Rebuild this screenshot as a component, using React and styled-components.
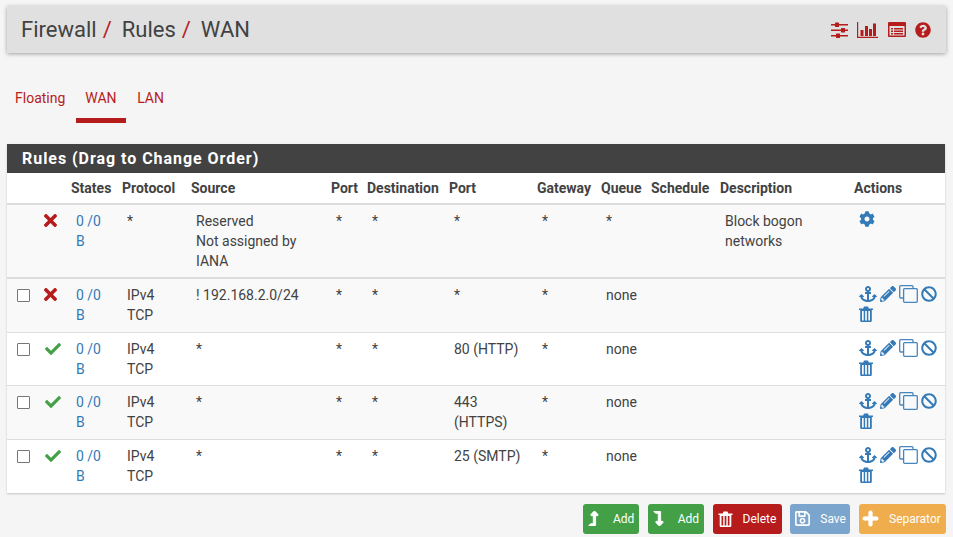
import styled, { createGlobalStyle } from "styled-components";
import {
  FaTimes,
  FaCheck,
  FaCog,
  FaAnchor,
  FaPencilAlt,
  FaBan,
  FaRegSave,
  FaPlus,
  FaLevelUpAlt,
  FaLevelDownAlt,
  FaQuestionCircle,
} from "react-icons/fa";

const Global = createGlobalStyle`
  html, body {
    margin: 0;
    background: #f5f5f5;
    font-family: Roboto, "Liberation Sans", sans-serif;
    font-size: 14px;
    color: #424242;
  }
`;

const rules = [
  { pass: false, shade: true, source: "! 192.168.2.0/24", port: ["*"] },
  { pass: true, shade: false, source: "*", port: ["80 (HTTP)"] },
  { pass: true, shade: true, source: "*", port: ["443", "(HTTPS)"] },
  { pass: true, shade: false, source: "*", port: ["25 (SMTP)"] },
];

const columns = [32, 27, 51, 69, 140, 36, 82, 88, 64, 50, 69, 134, 96];
const headers = ["", "", "States", "Protocol", "Source", "Port", "Destination", "Port", "Gateway", "Queue", "Schedule", "Description", "Actions"];

function SlidersIcon() {
  return (
    <svg width="17" height="16" viewBox="0 0 17 16" fill="currentColor">
      <path d="M0 2h17v1.500H0zM0 7.500h17V9H0zM0 13h17v1.500H0z" />
      <rect x="4" y="0.500" width="4" height="4.500" rx="0.500" />
      <rect x="10" y="6" width="4" height="4.500" rx="0.500" />
      <rect x="5" y="11.500" width="4" height="4.500" rx="0.500" />
    </svg>
  );
}

function ChartIcon() {
  return (
    <svg width="21" height="16" viewBox="0 0 21 16" fill="currentColor">
      <path d="M0 0h1.200v14.800H21V16H0z" />
      <rect x="3.500" y="8" width="3" height="6" />
      <rect x="8" y="4" width="3" height="10" />
      <rect x="12" y="7" width="3" height="7" />
      <rect x="16" y="1.500" width="3" height="12.500" />
    </svg>
  );
}

function ListWindow() {
  return (
    <svg width="19" height="15" viewBox="0 0 19 15" fill="currentColor">
      <path fillRule="evenodd" d="M2 0h16a1 1 0 0 1 1 1v13a1 1 0 0 1-1 1H2a1 1 0 0 1-1-1V1a1 1 0 0 1 1-1zM2.500 4v9.500h15V4z" />
      <path d="M4 6h2v1.500H4zM7 6h9v1.500H7zM4 8.500h2V10H4zM7 8.500h9V10H7zM4 11h2v1.500H4zM7 11h9v1.500H7z" />
    </svg>
  );
}

function CloneIcon() {
  return (
    <svg width="19" height="18" viewBox="0 0 19 18" fill="none" stroke="currentColor" strokeWidth="1.300" opacity="0.9">
      <path d="M14 3.600V1.700a1 1 0 0 0-1-1H1.700a1 1 0 0 0-1 1V12a1 1 0 0 0 1 1H4.600" />
      <rect x="4.600" y="3.600" width="13.700" height="13.700" rx="1" />
    </svg>
  );
}

function TrashIcon({ width = 14, height = 16 }) {
  return (
    <svg width={width} height={height} viewBox="0 0 14 16" fill="currentColor">
      <path d="M0 2.500h4.200l.8-2h4l.8 2H14V4H0z" />
      <path fillRule="evenodd" d="M1.200 4h11.600v10.800a1.200 1.200 0 0 1-1.200 1.200H2.400a1.200 1.200 0 0 1-1.200-1.200zM3 5v9.500h1.700V5zM6.150 5v9.500h1.700V5zM9.300 5v9.500H11V5z" />
    </svg>
  );
}

function Lines({ items }) {
  return items.map((line) => <div key={line}>{line}</div>);
}

function FooterButton({ bg, width, nudge = 0, icon, children }) {
  return (
    <Button $bg={bg} $width={width}>
      <ButtonIcon $nudge={nudge}>{icon}</ButtonIcon>
      <span>{children}</span>
    </Button>
  );
}

export default function App() {
  return (
    <Page>
      <Global />
      <TitleBar>
        <Crumbs>
          <span>Firewall</span>
          <Slash>/</Slash>
          <span>Rules</span>
          <Slash>/</Slash>
          <span>WAN</span>
        </Crumbs>
        <TitleIcons>
          <SlidersIcon />
          <ChartIcon />
          <ListWindow />
          <FaQuestionCircle size={16} />
        </TitleIcons>
      </TitleBar>

      <Tabs>
        <Tab>Floating</Tab>
        <Tab $active>WAN</Tab>
        <Tab>LAN</Tab>
      </Tabs>

      <Panel>
        <PanelHeading>Rules (Drag to Change Order)</PanelHeading>
        <RulesTable>
          <colgroup>
            {columns.map((w, i) => (
              <col key={i} style={{ width: w }} />
            ))}
          </colgroup>
          <thead>
            <tr>
              {headers.map((h, i) => (
                <th key={i}>{h}</th>
              ))}
            </tr>
          </thead>
          <tbody>
            <SystemRow>
              <Cell />
              <IconCell>
                <Cross><FaTimes size={19} /></Cross>
              </IconCell>
              <Cell>
                <StateLink>0 /0</StateLink>
                <StateLink>B</StateLink>
              </Cell>
              <Cell>*</Cell>
              <Cell>
                <Lines items={["Reserved", "Not assigned by", "IANA"]} />
              </Cell>
              <Cell>*</Cell>
              <Cell>*</Cell>
              <Cell>*</Cell>
              <Cell>*</Cell>
              <Cell>*</Cell>
              <Cell />
              <Cell>
                <Lines items={["Block bogon", "networks"]} />
              </Cell>
              <Cell>
                <Actions>
                  <FaCog size={16} />
                </Actions>
              </Cell>
            </SystemRow>
            {rules.map((r, i) => (
              <RuleRow key={i} $shade={r.shade}>
                <CheckCell>
                  <CheckBox />
                </CheckCell>
                <IconCell>
                  {r.pass ? (
                    <Tick><FaCheck size={16} /></Tick>
                  ) : (
                    <Cross><FaTimes size={19} /></Cross>
                  )}
                </IconCell>
                <Cell>
                  <StateLink>0 /0</StateLink>
                  <StateLink>B</StateLink>
                </Cell>
                <Cell>
                  <Lines items={["IPv4", "TCP"]} />
                </Cell>
                <Cell>{r.source}</Cell>
                <Cell>*</Cell>
                <Cell>*</Cell>
                <Cell>
                  <Lines items={r.port} />
                </Cell>
                <Cell>*</Cell>
                <Cell>none</Cell>
                <Cell />
                <Cell />
                <Cell>
                  <Actions>
                    <FaAnchor size={18} />
                    <FaPencilAlt size={16} />
                    <CloneIcon />
                    <FaBan size={16} />
                    <TrashSlot>
                      <TrashIcon />
                    </TrashSlot>
                  </Actions>
                </Cell>
              </RuleRow>
            ))}
          </tbody>
        </RulesTable>
      </Panel>

      <Footer>
        <FooterButton bg="#43a047" width={56} nudge={-2} icon={<FaLevelUpAlt size={15} stroke="currentColor" strokeWidth={30} />}>Add</FooterButton>
        <FooterButton bg="#43a047" width={56} nudge={-2} icon={<FaLevelDownAlt size={15} stroke="currentColor" strokeWidth={30} />}>Add</FooterButton>
        <FooterButton bg="#b71c1c" width={69} icon={<TrashIcon width={15} height={16} />}>Delete</FooterButton>
        <FooterButton bg="#7ba5cc" width={60} nudge={-1} icon={<FaRegSave size={17} />}>Save</FooterButton>
        <FooterButton bg="#f0ad4e" width={87} nudge={-2} icon={<FaPlus size={17} stroke="currentColor" strokeWidth={30} />}>Separator</FooterButton>
      </Footer>
    </Page>
  );
}

const Page = styled.div`
  width: 953px;
  height: 537px;
  overflow: hidden;
  padding: 6px 7px 0;
  box-sizing: border-box;
`;

const TitleBar = styled.div`
  display: flex;
  align-items: center;
  justify-content: space-between;
  height: 47px;
  padding: 0 15px 0 14px;
  background: #e0e0e0;
  box-shadow: 0 1px 4px rgba(0, 0, 0, 0.35);
`;

const Crumbs = styled.div`
  display: flex;
  font-size: 22px;
  color: #424242;
`;

const Slash = styled.span`
  color: #b71c1c;
  margin: 0 10px 0 6px;
`;

const TitleIcons = styled.div`
  display: flex;
  align-items: center;
  gap: 9px;
  color: #b71c1c;
`;

const Tabs = styled.div`
  display: flex;
  margin: 24px 0 0 -1px;
`;

const Tab = styled.div`
  box-sizing: border-box;
  height: 46px;
  padding: 11px 9px 0;
  margin-right: 2px;
  line-height: 20px;
  color: #b71c1c;
  border-bottom: 5px solid ${(p) => (p.$active ? "#b71c1c" : "transparent")};

  &:last-child {
    margin-left: 0.6px;
  }
`;

const Panel = styled.div`
  margin-top: 21px;
  width: 938px;
  background: #fff;
  box-shadow: 0 1px 2px rgba(0, 0, 0, 0.2);
`;

const PanelHeading = styled.div`
  height: 29px;
  line-height: 30px;
  padding-left: 15px;
  background: #424242;
  color: #fff;
  font-size: 16px;
  font-weight: 700;
  letter-spacing: 0.96px;
`;

const RulesTable = styled.table`
  width: 938px;
  table-layout: fixed;
  border-collapse: collapse;
  line-height: 20px;

  th {
    height: 30px;
    padding: 0 5px;
    text-align: left;
    font-weight: 700;
    font-size: 14px;
    white-space: nowrap;
    color: #424242;
    border-bottom: 2px solid #ddd;
    background: #fff;
  }
`;

const SystemRow = styled.tr`
  background: #f9f9f9;
  border-bottom: 2px solid #ddd;
`;

const RuleRow = styled.tr`
  height: 53.5px;
  background: ${(p) => (p.$shade ? "#f9f9f9" : "#fff")};
  border-bottom: 1px solid #ddd;

  &:nth-child(2) {
    height: 54px;
  }

  &:last-child {
    border-bottom: 0;
  }
`;

const Cell = styled.td`
  padding: 6px 5px 6px 10px;
  vertical-align: top;
  white-space: nowrap;
`;

const CheckCell = styled(Cell)`
  padding-top: 10px;
`;

const IconCell = styled(Cell)`
  padding-left: 5px;
  padding-top: 7px;

  svg {
    display: block;
  }
`;

const CheckBox = styled.div`
  box-sizing: border-box;
  width: 13px;
  height: 13px;
  border: 1px solid #767676;
  border-radius: 1px;
  background: #fff;
`;

const Cross = styled.span`
  color: #b71c1c;

  svg {
    margin: -1px 0 0 -3px;
  }
`;

const Tick = styled.span`
  color: #43a047;

  svg {
    margin: 1px 0 0 1px;
  }
`;

const StateLink = styled.div`
  color: #337ab7;
`;

const Actions = styled.div`
  display: flex;
  flex-wrap: wrap;
  align-items: flex-start;
  gap: 3px;
  color: #337ab7;
  width: 80px;

  > svg:nth-child(2),
  > svg:nth-child(4) {
    margin-top: 1px;
  }
`;

const TrashSlot = styled.div`
  flex-basis: 100%;
  height: 16px;
`;

const Footer = styled.div`
  display: flex;
  justify-content: flex-end;
  gap: 8.75px;
  margin-top: 11px;
  width: 939px;
`;

const Button = styled.div`
  display: flex;
  align-items: center;
  box-sizing: border-box;
  width: ${(p) => p.$width}px;
  height: 30px;
  padding: 0 5px;
  border-radius: 3px;
  font-size: 12px;
  color: #fff;
  white-space: nowrap;
  background: ${(p) => p.$bg};
`;

const ButtonIcon = styled.span`
  display: flex;
  align-items: center;
  flex: 0 0 25px;

  svg {
    margin-left: ${(p) => p.$nudge}px;
  }
`;
